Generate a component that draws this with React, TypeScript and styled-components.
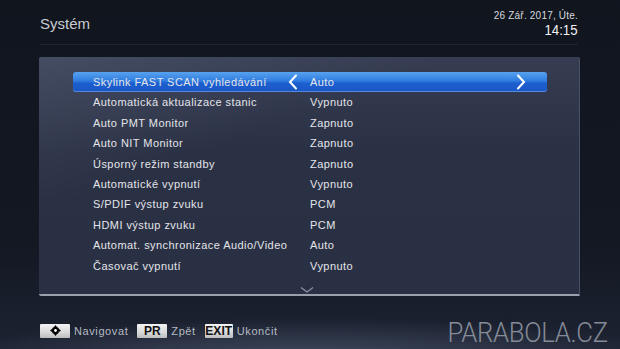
import React from "react";
import styled, { createGlobalStyle } from "styled-components";

const Global = createGlobalStyle`
  html, body { margin: 0; padding: 0; background: #11151e; }
  body { width: 620px; height: 349px; overflow: hidden; font-family: "Liberation Sans", Arial, sans-serif; }
`;

const Screen = styled.div`
  width: 620px;
  height: 349px;
  box-sizing: border-box;
  padding: 9px 40px 0 39px;
  display: flex;
  flex-direction: column;
  background:
    radial-gradient(ellipse 520px 60px at 50% 360px, rgba(110,125,155,0.45), rgba(0,0,0,0) 70%),
    linear-gradient(180deg, #11151e 0%, #131823 70%, #1d2332 100%);
  position: relative;
  overflow: hidden;
`;

const Header = styled.div`
  display: flex;
  justify-content: space-between;
  align-items: flex-start;
  height: 35px;
  border-bottom: 1px solid #1f2431;
  margin-right: 2px;
  margin-left: 1px;
`;

const Title = styled.div`
  font-size: 15px;
  color: #c9ccd2;
  padding-top: 6px;
`;

const Clock = styled.div`
  display: flex;
  flex-direction: column;
  align-items: flex-end;
  color: #d6d9de;
  padding-top: 1px;
`;

const DateText = styled.div`
  font-size: 10px;
  line-height: 12px;
  letter-spacing: 0.2px;
`;

const TimeText = styled.div`
  font-size: 15px;
  line-height: 16px;
  color: #eef0f3;
  transform: scaleX(0.88);
  transform-origin: right center;
`;

const Panel = styled.div`
  margin-top: 12px;
  height: 240px;
  width: 541px;
  box-sizing: border-box;
  background:
    linear-gradient(160deg, rgba(95,105,130,0.35) 0%, rgba(0,0,0,0) 35%),
    linear-gradient(180deg, #363d52 0%, #2b3144 40%, #2a3043 100%);
  border-right: 1px solid #4a5064;
  border-bottom: 2px solid #9aa0ac;
  border-radius: 2px 2px 0 2px;
  padding: 15px 32px 0 34px;
  display: flex;
  flex-direction: column;
  position: relative;
`;

const Row = styled.div<{ $active?: boolean }>`
  height: 20.4px;
  display: flex;
  align-items: center;
  position: relative;
  border-radius: 3px;
  font-size: 11px;
  letter-spacing: 0.45px;
  color: #e3e5ea;
  background: ${(p) =>
    p.$active
      ? "linear-gradient(180deg, #58a2ee 0%, #2f7ce0 45%, #1d5fcf 55%, #1a56c4 100%)"
      : "transparent"};
  box-shadow: ${(p) => (p.$active ? "inset 0 -1px 0 rgba(120,170,240,0.6)" : "none")};
`;

const Label = styled.div`
  box-sizing: border-box;
  width: 217px;
  padding-left: 20px;
  flex-shrink: 0;
`;

const Value = styled.div`
  flex: 1;
  padding-left: 20px;
`;

const ArrowL = styled.svg`
  position: absolute;
  left: 214px;
  top: 2px;
`;

const ArrowR = styled.svg`
  position: absolute;
  left: 442px;
  top: 2px;
`;

const Down = styled.svg`
  position: absolute;
  left: 261px;
  bottom: 0;
`;

const Footer = styled.div`
  display: flex;
  align-items: center;
  justify-content: space-between;
  margin-top: 16px;
  padding-left: 1px;
`;

const Keys = styled.div`
  display: flex;
  align-items: center;
  gap: 4px;
`;

const Key = styled.div<{ $w: number }>`
  width: ${(p) => p.$w}px;
  height: 14px;
  background: linear-gradient(180deg, #f4f4f4 0%, #d8d8d8 60%, #bdbdbd 100%);
  border-radius: 1px;
  display: flex;
  align-items: center;
  justify-content: center;
  font-size: 12px;
  font-weight: bold;
  color: #111;
  letter-spacing: 0.1px;
`;

const KeyText = styled.span`
  font-size: 11px;
  color: #b6bac2;
  letter-spacing: 0.6px;
  margin-right: 5px;
`;

const Brand = styled.div`
  font-size: 27px;
  color: #858b97;
  letter-spacing: -0.3px;
  margin-right: -28px;
  margin-top: 5px;
  font-family: Roboto, "Liberation Sans", sans-serif;
  font-weight: 300;
  transform: scaleX(0.95);
  transform-origin: right center;
`;

const rows: [string, string][] = [
  ["Skylink FAST SCAN vyhledávání", "Auto"],
  ["Automatická aktualizace stanic", "Vypnuto"],
  ["Auto PMT Monitor", "Zapnuto"],
  ["Auto NIT Monitor", "Zapnuto"],
  ["Úsporný režim  standby", "Zapnuto"],
  ["Automatické vypnutí", "Vypnuto"],
  ["S/PDIF výstup zvuku", "PCM"],
  ["HDMI výstup zvuku", "PCM"],
  ["Automat. synchronizace Audio/Video", "Auto"],
  ["Časovač vypnutí", "Vypnuto"],
];

export default function App() {
  return (
    <>
      <Global />
      <Screen>
        <Header>
          <Title>Systém</Title>
          <Clock>
            <DateText>26 Zář. 2017, Úte.</DateText>
            <TimeText>14:15</TimeText>
          </Clock>
        </Header>
        <Panel>
          {rows.map(([l, v], i) => (
            <Row key={i} $active={i === 0}>
              <Label>{l}</Label>
              <Value>{v}</Value>
              {i === 0 && (
                <>
                  <ArrowL width="12" height="16" viewBox="0 0 12 16">
                    <path d="M9 1.5 L3 8 L9 14.5" stroke="#fff" strokeWidth="2" fill="none" strokeLinecap="round" />
                  </ArrowL>
                  <ArrowR width="12" height="16" viewBox="0 0 12 16">
                    <path d="M3 1.5 L9 8 L3 14.5" stroke="#fff" strokeWidth="2" fill="none" strokeLinecap="round" />
                  </ArrowR>
                </>
              )}
            </Row>
          ))}
          <Down width="14" height="8" viewBox="0 0 14 8">
            <path d="M1 1.5 L7 6 L13 1.5" stroke="#8d93a3" strokeWidth="1.2" fill="none" />
          </Down>
        </Panel>
        <Footer>
          <Keys>
            <Key $w={30}>
              <svg width="11" height="11" viewBox="0 0 10 10">
                <circle cx="5" cy="5" r="3.3" fill="#000" />
                <circle cx="5" cy="5" r="1.3" fill="#fff" />
                <path d="M5 0 L6.3 1.8 H3.7 Z M5 10 L6.3 8.2 H3.7 Z M0 5 L1.8 3.7 V6.3 Z M10 5 L8.2 3.7 V6.3 Z" fill="#000" />
              </svg>
            </Key>
            <KeyText>Navigovat</KeyText>
            <Key $w={30}>PR</Key>
            <KeyText>Zpět</KeyText>
            <Key $w={28}>EXIT</Key>
            <KeyText>Ukončit</KeyText>
          </Keys>
          <Brand>PARABOLA.CZ</Brand>
        </Footer>
      </Screen>
    </>
  );
}
